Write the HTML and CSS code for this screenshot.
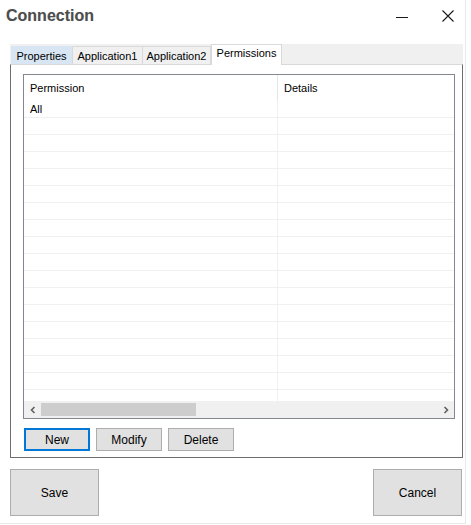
FILE: index.html
```html
<!DOCTYPE html>
<html lang="en-US">
<head>
    <meta charset="utf-8"/>
    <title>Connection</title>
    <link rel="stylesheet" href="styles.css">
</head>
<body>
    <div class="window">
        <div class="titlebar">
            <div class="title">Connection</div>
            <div class="controls">
                <span class="ctrl minimize">
                    <svg width="12" height="12" viewBox="0 0 12 12"><line x1="0" y1="6.5" x2="12" y2="6.5" stroke="#1a1a1a" stroke-width="1"/></svg>
                </span>
                <span class="ctrl close">
                    <svg width="12" height="12" viewBox="0 0 12 12"><path d="M0.5 0.5 L11.5 11.5 M11.5 0.5 L0.5 11.5" stroke="#1a1a1a" stroke-width="1.1" fill="none"/></svg>
                </span>
            </div>
        </div>

        <div class="tabs">
            <div class="tab tab-hover">Properties</div>
            <div class="tab tab-app1">Application1</div>
            <div class="tab tab-app2">Application2</div>
            <div class="tab tab-active">Permissions</div>
        </div>

        <div class="panel">
            <div class="listview">
                <div class="list-header">
                    <div class="col col-name">Permission</div>
                    <div class="col col-details">Details</div>
                </div>
                <div class="list-body" id="listBody">
                    <div class="row"><div class="col col-name">All</div><div class="col col-details"></div></div>
                </div>
                <div class="hscroll">
                    <span class="arrow">
                        <svg width="8" height="8" viewBox="0 0 8 8"><path d="M5.5 1 L2.5 4 L5.5 7" stroke="#606060" stroke-width="1.6" fill="none"/></svg>
                    </span>
                    <div class="track"><div class="thumb"></div></div>
                    <span class="arrow">
                        <svg width="8" height="8" viewBox="0 0 8 8"><path d="M2.5 1 L5.5 4 L2.5 7" stroke="#606060" stroke-width="1.6" fill="none"/></svg>
                    </span>
                </div>
            </div>
            <div class="actions">
                <button class="btn btn-focus">New</button>
                <button class="btn">Modify</button>
                <button class="btn">Delete</button>
            </div>
        </div>

        <div class="footer">
            <button class="big-btn">Save</button>
            <button class="big-btn">Cancel</button>
        </div>
    </div>

    <script>
        // fill the empty rows of the list
        const body = document.getElementById('listBody');
        for (let i = 0; i < 18; i++) {
            const row = document.createElement('div');
            row.className = 'row';
            row.innerHTML = '<div class="col col-name"></div><div class="col col-details"></div>';
            body.appendChild(row);
        }
    </script>
</body>
</html>
```

FILE: styles.css
```css
body {
    margin: 0;
    background: white;
    font-family: 'Liberation Sans', Arial, sans-serif;
    font-size: 11px;
    color: #000;
}

.window {
    width: 466px;
    height: 524px;
    box-sizing: border-box;
    border-right: 1px solid #e8e8e8;
    border-bottom: 1px solid #e8e8e8;
    overflow: hidden;
}

.titlebar {
    height: 32px;
    display: flex;
    align-items: center;
    justify-content: space-between;
    padding-left: 6px;
    margin-bottom: 12px;
}

.title {
    font-size: 16px;
    font-weight: bold;
    color: #4d4d4d;
    text-shadow: 0 0 1px rgba(0, 0, 0, 0.15);
}

.controls {
    display: flex;
    align-items: center;
    gap: 34px;
    padding-right: 11px;
}

.ctrl {
    display: flex;
    width: 12px;
    height: 12px;
}

.minimize {
    margin-top: 1px;
}

.tabs {
    margin-left: 10px;
    width: 453px;
    height: 20px;
    box-sizing: border-box;
    padding-left: 1px;
    background: #f0f0f0;
    display: flex;
    align-items: flex-end;
}

.tab {
    height: 18px;
    box-sizing: border-box;
    border-right: 1px solid #d9d9d9;
    border-top: 1px solid #d9d9d9;
    text-align: center;
    line-height: 18px;
    color: #000;
}

.tab-hover {
    width: 62px;
    background: #d8e6f3;
    border-top-color: #d8e6f3;
}

.tab-app1 {
    width: 70px;
}

.tab-app2 {
    width: 68px;
}

.tab-active {
    width: 71px;
    height: 21px;
    line-height: 17px;
    background: white;
    border: 1px solid #d9d9d9;
    border-bottom: none;
    margin-bottom: -1px;
    position: relative;
}

.panel {
    margin-left: 10px;
    width: 453px;
    height: 394px;
    box-sizing: border-box;
    border: 1px solid #6e6e6e;
    border-top-color: #d9d9d9;
    padding: 9px 7px 6px 12px;
    display: flex;
    flex-direction: column;
}

.listview {
    width: 432px;
    height: 345px;
    box-sizing: border-box;
    border: 1px solid #828790;
    display: flex;
    flex-direction: column;
}

.list-header {
    height: 26px;
    display: flex;
    flex-shrink: 0;
}

.list-header .col {
    line-height: 26px;
}

.col {
    box-sizing: border-box;
    padding-left: 6px;
}

.col-name {
    width: 254px;
    border-right: 1px solid #e5e5e5;
}

.col-details {
    flex: 1;
}

.list-body {
    flex: 1;
    overflow: hidden;
}

.row {
    height: 17px;
    box-sizing: border-box;
    border-bottom: 1px solid #f0f0f0;
    display: flex;
}

.row .col {
    line-height: 16px;
    border-right-color: #f0f0f0;
}

.hscroll {
    height: 17px;
    flex-shrink: 0;
    background: #f0f0f0;
    display: flex;
    align-items: center;
}

.arrow {
    width: 17px;
    height: 17px;
    display: flex;
    align-items: center;
    justify-content: center;
}

.track {
    flex: 1;
    height: 13px;
}

.thumb {
    width: 155px;
    height: 13px;
    background: #cdcdcd;
}

.actions {
    display: flex;
    gap: 6px;
    margin-top: 9px;
    padding-left: 1px;
}

.btn {
    width: 66px;
    height: 23px;
    box-sizing: border-box;
    background: #e1e1e1;
    border: 1px solid #adadad;
    font-family: 'Liberation Sans', Arial, sans-serif;
    font-size: 12px;
    color: #000;
    padding: 0;
}

.btn-focus {
    border: 2px solid #0078d7;
}

.footer {
    display: flex;
    justify-content: space-between;
    width: 452px;
    margin: 11px 0 0 10px;
}

.big-btn {
    width: 89px;
    height: 47px;
    box-sizing: border-box;
    background: #e1e1e1;
    border: 1px solid #adadad;
    font-family: 'Liberation Sans', Arial, sans-serif;
    font-size: 12px;
    color: #000;
    padding: 0;
}
```
